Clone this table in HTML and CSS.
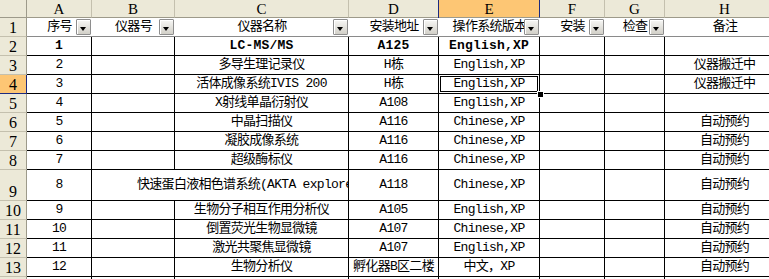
FILE: index.html
```html
<!DOCTYPE html>
<html lang="zh-CN">
<head>
<meta charset="utf-8">
<title>仪器列表</title>
<link rel="stylesheet" href="styles.css">
</head>
<body>
<div class="sheet">
  <div class="corner"></div>
  <div class="ch">A</div><div class="ch">B</div><div class="ch">C</div><div class="ch">D</div><div class="ch colsel">E</div><div class="ch">F</div><div class="ch">G</div><div class="ch">H</div>

  <div class="rh">1</div>
  <div class="hd">序号<span class="dd"></span></div>
  <div class="hd">仪器号<span class="dd"></span></div>
  <div class="hd">仪器名称<span class="dd"></span></div>
  <div class="hd">安装地址<span class="dd"></span></div>
  <div class="hd">操作系统版本<span class="dd"></span></div>
  <div class="hd">安装<span class="dd"></span></div>
  <div class="hd">检查<span class="dd"></span></div>
  <div class="hd">备注</div>

  <div class="rh">2</div>
  <div class="c b">1</div><div class="c"></div><div class="c b">LC-MS/MS</div><div class="c b">A125</div><div class="c b">English,XP</div><div class="c"></div><div class="c"></div><div class="c"></div>

  <div class="rh">3</div>
  <div class="c">2</div><div class="c"></div><div class="c">多导生理记录仪</div><div class="c">H栋</div><div class="c">English,XP</div><div class="c"></div><div class="c"></div><div class="c">仪器搬迁中</div>

  <div class="rh rowsel">4</div>
  <div class="c">3</div><div class="c"></div><div class="c">活体成像系统IVIS 200</div><div class="c">H栋</div><div class="c active">English,XP<span class="selbox"><span class="handle"></span></span></div><div class="c"></div><div class="c"></div><div class="c">仪器搬迁中</div>

  <div class="rh">5</div>
  <div class="c">4</div><div class="c"></div><div class="c">X射线单晶衍射仪</div><div class="c">A108</div><div class="c">English,XP</div><div class="c"></div><div class="c"></div><div class="c"></div>

  <div class="rh">6</div>
  <div class="c">5</div><div class="c"></div><div class="c">中晶扫描仪</div><div class="c">A116</div><div class="c">Chinese,XP</div><div class="c"></div><div class="c"></div><div class="c">自动预约</div>

  <div class="rh">7</div>
  <div class="c">6</div><div class="c"></div><div class="c">凝胶成像系统</div><div class="c">A116</div><div class="c">Chinese,XP</div><div class="c"></div><div class="c"></div><div class="c">自动预约</div>

  <div class="rh">8</div>
  <div class="c">7</div><div class="c"></div><div class="c">超级酶标仪</div><div class="c">A116</div><div class="c">Chinese,XP</div><div class="c"></div><div class="c"></div><div class="c">自动预约</div>

  <div class="rh">9</div>
  <div class="c">8</div><div class="c spill">快速蛋白液相色谱系统(AKTA explorer)</div><div class="c">A118</div><div class="c">Chinese,XP</div><div class="c"></div><div class="c"></div><div class="c">自动预约</div>

  <div class="rh">10</div>
  <div class="c">9</div><div class="c"></div><div class="c">生物分子相互作用分析仪</div><div class="c">A105</div><div class="c">English,XP</div><div class="c"></div><div class="c"></div><div class="c">自动预约</div>

  <div class="rh">11</div>
  <div class="c">10</div><div class="c"></div><div class="c">倒置荧光生物显微镜</div><div class="c">A107</div><div class="c">Chinese,XP</div><div class="c"></div><div class="c"></div><div class="c">自动预约</div>

  <div class="rh">12</div>
  <div class="c">11</div><div class="c"></div><div class="c">激光共聚焦显微镜</div><div class="c">A107</div><div class="c">English,XP</div><div class="c"></div><div class="c"></div><div class="c">自动预约</div>

  <div class="rh">13</div>
  <div class="c">12</div><div class="c"></div><div class="c">生物分析仪</div><div class="c">孵化器B区二楼</div><div class="c">中文，XP</div><div class="c"></div><div class="c"></div><div class="c">自动预约</div>

  <div class="rh"></div>
  <div class="c"></div><div class="c"></div><div class="c"></div><div class="c"></div><div class="c"></div><div class="c"></div><div class="c"></div><div class="c"></div>
</div>
</body>
</html>
```

FILE: styles.css
```css
html, body {
  margin: 0;
  padding: 0;
  background: #ffffff;
  overflow: hidden;
}

body {
  width: 769px;
  height: 279px;
}

.sheet {
  display: grid;
  grid-template-columns: 27px 65px 83px 174px 90px 101px 65px 60px 120px;
  grid-template-rows: 18px repeat(8, 19px) 31px repeat(5, 19px);
  font-family: "Liberation Mono", "Noto Sans CJK SC", monospace;
  font-size: 13px;
  letter-spacing: -0.7px;
  color: #000;
}

.sheet > div {
  box-sizing: border-box;
  min-width: 0;
  overflow: hidden;
  white-space: nowrap;
  line-height: 16px;
}

.corner {
  background: #ece9d8;
  border-right: 1px solid #9d9a8a;
  border-bottom: 1px solid #9d9a8a;
}

.ch {
  background: #ece9d8;
  border-right: 1px solid #c4c0ae;
  border-bottom: 1px solid #9d9a8a;
  display: flex;
  align-items: center;
  justify-content: center;
  font-family: "Liberation Serif", serif;
  font-size: 15px;
  letter-spacing: 0;
}

.ch.colsel {
  background: #fdc674;
  border-right-color: #1c2a80;
  box-shadow: -1px 0 0 #1c2a80;
}

.rh {
  background: #ece9d8;
  border-right: 1px solid #9d9a8a;
  border-bottom: 1px solid #c4c0ae;
  display: flex;
  align-items: flex-end;
  justify-content: center;
  font-family: "Liberation Serif", serif;
  font-size: 16px;
  letter-spacing: 0;
}

.rh.rowsel {
  background: #fdc674;
  border-right-color: #1c2a80;
  border-bottom-color: #1c2a80;
}

.hd {
  position: relative;
  border-bottom: 1px solid #8a8a8a;
  display: flex;
  align-items: center;
  justify-content: center;
}

.dd {
  position: absolute;
  right: 1px;
  top: 1px;
  width: 15px;
  height: 16px;
  box-sizing: border-box;
  border: 1px solid #8e8e8e;
  border-radius: 1px;
  background: linear-gradient(#f7f7f5, #d2d0c8);
  box-shadow: inset 1px 1px 0 #ffffff;
}

.dd::after {
  content: "";
  position: absolute;
  left: 3px;
  top: 7px;
  width: 0;
  height: 0;
  border-left: 3.5px solid transparent;
  border-right: 3.5px solid transparent;
  border-top: 4px solid #000;
}

.c {
  border-right: 1px solid #000;
  border-bottom: 1px solid #000;
  display: flex;
  align-items: center;
  justify-content: center;
}

.c.b {
  font-weight: bold;
  letter-spacing: 0.2px;
}

.c.spill {
  grid-column: span 2;
  justify-content: flex-start;
  padding-left: 45px;
}

.c.active {
  position: relative;
  overflow: visible;
  z-index: 2;
}

.selbox {
  position: absolute;
  left: -1px;
  top: -1px;
  right: -1px;
  bottom: -1px;
  border: 1px solid #000;
  box-shadow: inset 0 0 0 1px #fff, inset 0 0 0 2px #000;
}

.handle {
  position: absolute;
  right: -4px;
  bottom: -4px;
  width: 5px;
  height: 5px;
  background: #000;
  outline: 1px solid #fff;
}
```
